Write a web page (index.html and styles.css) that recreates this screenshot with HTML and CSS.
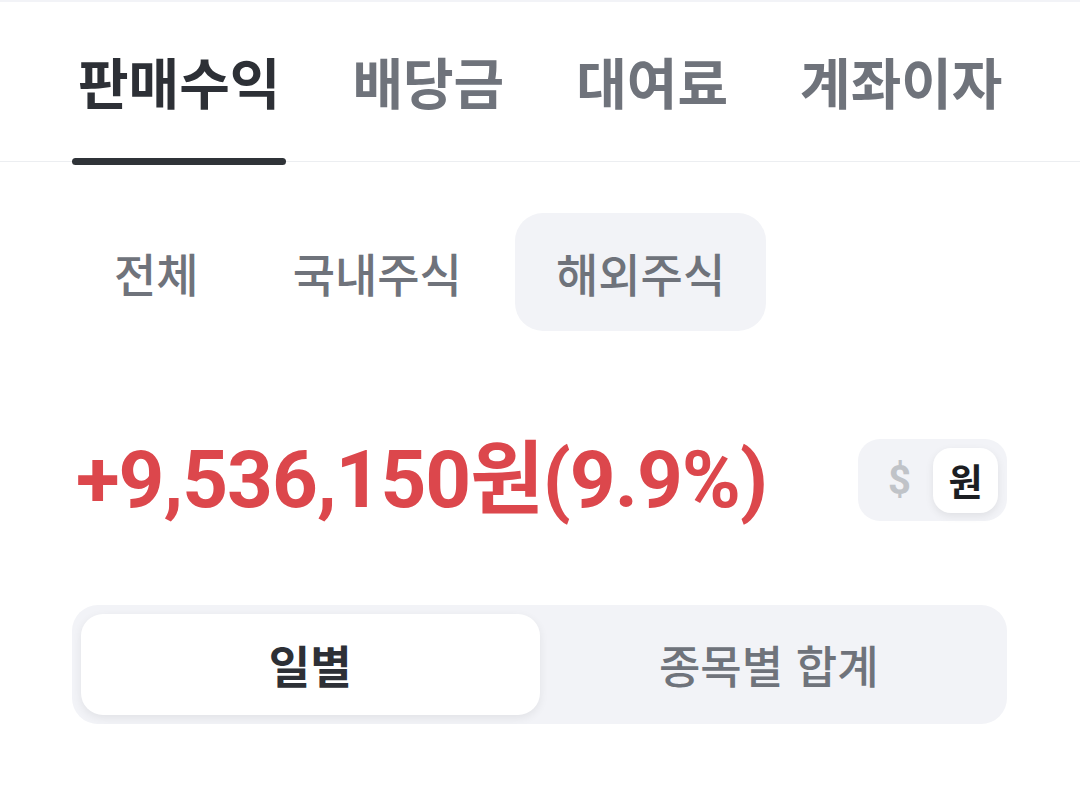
FILE: index.html
```html
<!DOCTYPE html>
<html lang="ko">
<head>
    <meta charset="UTF-8" />
    <meta name="viewport" content="width=device-width, initial-scale=1.0" />
    <title>판매수익</title>
    <link rel="stylesheet" href="styles.css">
</head>
<body>
    <div class="page">
        <nav class="tabs">
            <a class="tab active">판매수익</a>
            <a class="tab">배당금</a>
            <a class="tab">대여료</a>
            <a class="tab">계좌이자</a>
        </nav>

        <div class="chips">
            <span class="chip">전체</span>
            <span class="chip">국내주식</span>
            <span class="chip active">해외주식</span>
        </div>

        <div class="summary">
            <h1 class="amount">+9,536,150원(9.9%)</h1>
            <div class="currency">
                <span class="cur">$</span>
                <span class="cur active">원</span>
            </div>
        </div>

        <div class="segment">
            <button class="seg active">일별</button>
            <button class="seg">종목별 합계</button>
        </div>
    </div>
</body>
</html>
```

FILE: styles.css
```css
:root {
  --text-strong: #2d3036;
  --text-gray: #6f737b;
  --red: #dc474c;
  --fill: #f2f3f7;
  --line: #eceef1;
}

body {
  margin: 0;
  background: #ffffff;
  font-family: 'Roboto', 'Noto Sans CJK KR', sans-serif;
  color: var(--text-strong);
}

.page {
  border-top: 2px solid var(--fill);
}

/* top tabs */
.tabs {
  display: flex;
  gap: 60px;
  padding-left: 72px;
  border-bottom: 1px solid var(--line);
}

.tab {
  position: relative;
  flex-shrink: 0;
  white-space: nowrap;
  padding: 43px 6px 46px;
  font-family: 'Noto Sans CJK KR', sans-serif;
  font-size: 55px;
  line-height: 70px;
  font-weight: 600;
  color: var(--text-gray);
}

.tab.active {
  font-weight: 700;
  color: var(--text-strong);
}

.tab.active::after {
  content: '';
  position: absolute;
  left: 0;
  right: 0;
  bottom: -4px;
  height: 7px;
  border-radius: 4px;
  background: #2f3338;
}

/* market chips */
.chips {
  display: flex;
  gap: 12px;
  padding: 51px 73px 0;
}

.chip {
  padding: 0 41px;
  height: 118px;
  line-height: 118px;
  border-radius: 28px;
  white-space: nowrap;
  font-family: 'Noto Sans CJK KR', sans-serif;
  font-size: 46px;
  font-weight: 500;
  color: var(--text-gray);
}

.chip.active {
  background: var(--fill);
}

/* amount row */
.summary {
  display: flex;
  align-items: center;
  justify-content: space-between;
  margin-top: 99px;
  padding: 0 73px 0 76px;
}

.amount {
  margin: 0;
  font-size: 80px;
  line-height: 100px;
  font-weight: 700;
  letter-spacing: -1px;
  color: var(--red);
}

.currency {
  display: flex;
  align-items: center;
  width: 149px;
  height: 82px;
  box-sizing: border-box;
  padding: 8px 9px 8px 8px;
  border-radius: 22px;
  background: var(--fill);
}

.cur {
  flex: 1;
  text-align: center;
  font-size: 40px;
  font-weight: 700;
  color: #c0c3c8;
}

.cur.active {
  flex: 0 0 65px;
  height: 65px;
  line-height: 65px;
  border-radius: 18px;
  background: #ffffff;
  box-shadow: 0 3px 8px rgba(0, 0, 0, 0.08);
  font-family: 'Noto Sans CJK KR', sans-serif;
  font-size: 37px;
  color: #1c1e22;
}

/* view segment */
.segment {
  display: grid;
  grid-template-columns: 1fr 1fr;
  margin: 75px 73px 0 72px;
  padding: 9px;
  border-radius: 26px;
  background: var(--fill);
}

.seg {
  height: 101px;
  border: none;
  border-radius: 22px;
  background: transparent;
  font-family: 'Noto Sans CJK KR', sans-serif;
  font-size: 45px;
  font-weight: 500;
  color: var(--text-gray);
}

.seg.active {
  background: #ffffff;
  box-shadow: 0 3px 10px rgba(0, 0, 0, 0.07);
  font-weight: 700;
  color: var(--text-strong);
}
```
